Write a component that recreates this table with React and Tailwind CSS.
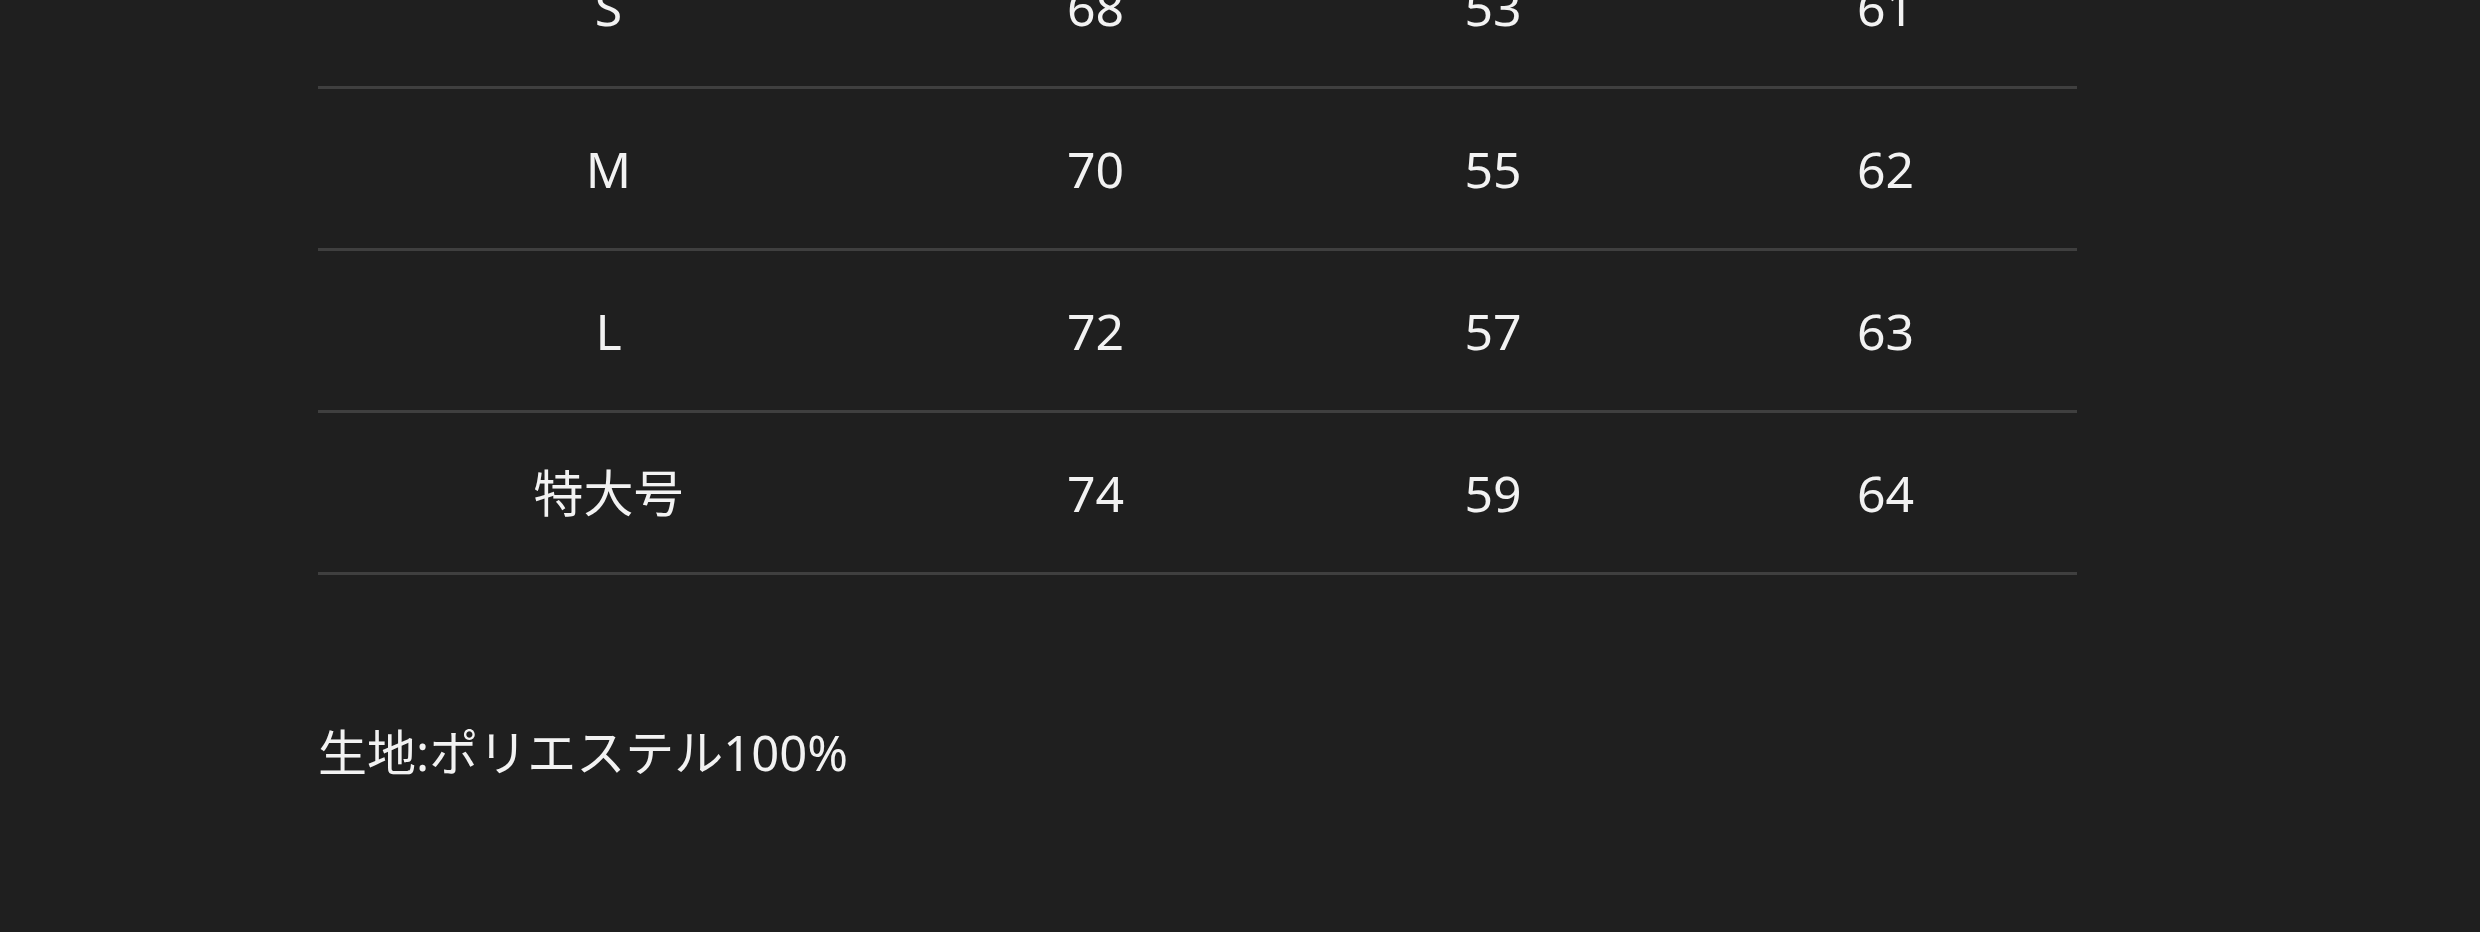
import React from 'react';

const ROWS = [
  ['S', '68', '53', '61'],
  ['M', '70', '55', '62'],
  ['L', '72', '57', '63'],
  ['特大号', '74', '59', '64'],
];

const FONT = "font-['Noto_Sans','Noto_Sans_CJK_JP',sans-serif]";

const SizeRow = ({ cells }) => (
  <div className="grid grid-cols-[581px_393px_402px_383px] h-[162px] border-b-[3px] border-[#3f3f3f]">
    {cells.map((c, i) => (
      <div key={i} className="flex items-center justify-center text-[50px] text-[#f2f2f2] leading-none">
        {c}
      </div>
    ))}
  </div>
);

export default function App() {
  return (
    <div className={`w-[2480px] h-[932px] overflow-hidden bg-[#1f1f1f] ${FONT}`}>
      <div className="ml-[318px] w-[1759px] -mt-[73px]">
        {/* size table */}
        {ROWS.map((r) => (
          <SizeRow key={r[0]} cells={r} />
        ))}

        {/* material note */}
        <p className="mt-[140px] text-[49px] leading-[75px] text-[#f2f2f2]">生地:ポリエステル100%</p>
      </div>
    </div>
  );
}
